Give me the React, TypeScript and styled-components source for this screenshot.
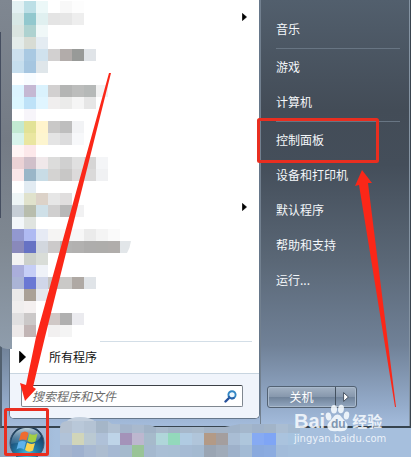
import React from 'react';
import styled, { createGlobalStyle } from 'styled-components';

const GlobalStyle = createGlobalStyle`
  * { box-sizing: border-box; }
  body {
    margin: 0;
    overflow: hidden;
    font: 12px/20px "Noto Sans CJK SC", sans-serif;
  }
  button, input { font: inherit; }
`;

const Desktop = styled.div`
  position: relative;
  display: flex;
  flex-direction: column;
  min-height: 100vh;
  overflow: hidden;
  background: #a6bedb;
`;

const StartMenu = styled.div`
  display: flex;
  padding-left: 7px;
  border-left: 2px solid #52606f;
  border-right: 1px solid #39444f;
  border-bottom: 2px solid #37444f;
  background: linear-gradient(#525f6d 0, #434c57 110px, #444e5a 165px, #5a6776 260px, #708197 345px, #94abca 405px, #a3bbdb 425px);
`;

const Programs = styled.main`
  flex: 1;
  display: flex;
  flex-direction: column;
  margin-bottom: 7px;
  border: 1px solid #66778a;
  border-top: 0;
  border-radius: 0 0 5px 5px;
  background: #fff;
  overflow: hidden;
`;

const Expanders = styled.div`
  display: flex;
  flex-direction: column;
  align-items: flex-end;
  gap: 182px;
  height: 341px;
  padding: 13px 12px 0;
`;

const IconButton = styled.button`
  display: flex;
  align-items: center;
  padding: 0;
  border: 0;
  background: none;
`;

const Rule = styled.hr`
  margin: 0 7px 0 10px;
  border: 0;
  border-top: 1px solid #d3dee7;
`;

const AllPrograms = styled.button`
  display: flex;
  align-items: center;
  gap: 23px;
  height: 31px;
  padding: 0 9px 2px;
  border: 0;
  background: none;
  color: #111;
  text-align: left;
`;

const SearchBar = styled.form`
  display: flex;
  padding: 11px 16px 11px 11px;
  border-top: 1px solid #c8d5e0;
  background: #f0f4fb;
`;

const SearchField = styled.label`
  flex: 1;
  display: flex;
  align-items: center;
  height: 22px;
  padding: 0 5px 0 10px;
  border: 1px solid #7f8790;
  border-top-color: #3d4147;
  border-radius: 2px;
  background: #fff;
`;

const SearchInput = styled.input`
  flex: 1;
  min-width: 0;
  height: 20px;
  padding: 0;
  border: 0;
  outline: 0;
  background: none;
  font-style: italic;
  &::placeholder { color: #6c6c6c; opacity: 1; }
`;

const Places = styled.nav`
  display: flex;
  flex-direction: column;
  width: 150px;
  border-left: 1px solid #72808f;
  border-right: 1px solid #8594a3;
`;

const PlaceList = styled.ul`
  height: 386px;
  margin: 0;
  padding: 0 9px 0 15px;
  list-style: none;
  overflow: hidden;
`;

const Place = styled.li<{ $first?: boolean; $divided?: boolean }>`
  height: ${p => (p.$divided ? 38 : 35)}px;
  margin-top: ${p => (p.$first ? -22 : 0)}px;
  padding-top: ${p => (p.$divided ? 2 : 0)}px;
  border-top: ${p => (p.$divided ? '1px solid #687583' : '0')};
`;

const PlaceLink = styled.a`
  display: flex;
  align-items: center;
  height: 35px;
  padding-bottom: 4px;
  color: #f4f7fa;
  text-decoration: none;
`;

const Power = styled.div`
  display: flex;
  align-self: flex-start;
  margin-left: 6px;
  border: 1px solid #536273;
  border-radius: 3px;
  box-shadow: inset 0 0 0 1px #a9b9cb;
  background: linear-gradient(#a3b2c4, #8798ad 48%, #71849b 52%, #92a6bf);
`;

const PowerButton = styled.button<{ $narrow?: boolean }>`
  display: flex;
  align-items: center;
  justify-content: center;
  width: ${p => (p.$narrow ? 21 : 67)}px;
  height: 20px;
  padding: 0;
  border: 0;
  border-left: ${p => (p.$narrow ? '1px solid #44515f' : '0')};
  background: none;
  color: #fff;
`;

const Taskbar = styled.footer`
  display: flex;
  align-items: flex-start;
  height: 30px;
  padding-left: 9px;
  background: linear-gradient(90deg, #8fa4bd, #a6bfdd 55px);
`;

const Overlay = styled.svg`
  position: absolute;
  top: 0;
  left: 0;
  pointer-events: none;
`;

const Watermark = styled.div`
  position: absolute;
  top: 404px;
  left: 294px;
  color: rgba(246, 250, 254, 0.88);
  pointer-events: none;
`;

const Brand = styled.div`
  display: flex;
  align-items: flex-end;
  height: 28px;
  font: 700 20px/22px "Liberation Sans", sans-serif;
`;

const BrandCn = styled.span`
  margin-left: 2px;
  font: 700 15px/22px "Noto Sans CJK SC", sans-serif;
`;

const Site = styled.div`
  font: 10px/13px "DejaVu Sans", sans-serif;
`;

const _ = '';
const programTiles: string[][] = [
  ['e3f1f3', 'bcdfe6', 'ecf8f8', _, 'f8f8f8', 'fdfdfd'],
  ['d8e8e6', '92c8ce', 'e0f0f0', 'e4e4e4', 'e6e6e6', 'eeeeee'],
  ['dae4e0', 'aed2d0', 'f0f8f8'],
  ['e4ecea', 'd8dcd4', 'e4ecf2'],
  ['cde0ee', 'a9c9e2', 'd0e2ee', 'd2d0d0', 'b2acaa', '989a98', 'e0e4e8'],
  ['c6deee', 'a6c6e0', 'dfe6ea'],
  [_, 'f8fcff'],
  ['dcf4ff', 'c5b8d3', 'daf2fd', 'd2d0d0', 'b4b5b4', 'bcbdbc', 'b6b9b8', 'f2f2f2'],
  ['dcf6ff', 'bee2f8', 'e0f5ff', 'f0eeee', 'ebebea', 'f5f5f5', 'e6e6e6'],
  [_, 'f7f5fa'],
  ['c2e9d2', 'e2e296', 'fff4cc', 'c9c8c7', 'bebebe', 'f2f3f5'],
  ['d8f3eb', 'eae6a0', 'fdf5cf', 'e4e4e4', 'dcdcdd', 'f7f8fa'],
  ['fff5f5', 'fce8ea'],
  ['ebd2d5', 'd0c0ca', 'f0e8ea', 'dcdcdb', 'd0d0d0', 'e0e0e0', 'd6d5d5', 'f4f5f7'],
  ['fae7e9', '9ab6c8', 'c8dce6', 'd4d3d2', 'c8c7c6', 'dcdada', 'dad9d9', 'f0f1f3'],
  [_, 'e2ebf2'],
  ['eef5f6', 'e0e2cc', 'dcd2c8', 'e6e6e6', 'e0dede'],
  ['c6ced6', 'b8bdad', 'cfe0e8', 'd0cfcf', 'b8b8b8', 'f1f1f2'],
  ['f3f7fa', 'e0e4e0'],
  ['9298d0', 'afbaf2', 'e6eaf4', 'f5f4f3', 'f6f6f6', 'f7f7f7', 'ebebeb', 'f4f4f4', 'fafafa'],
  ['8989bb', '6672c4', 'd2d7de', 'cccaca', 'b3b3b2', 'b2b1b0', 'aeadac', 'aeadab', 'b0adab'],
  ['f3f3f3', 'ccd0cb', 'd9ddd8'],
  ['aaaedb', 'c6cef6', 'eff2f8'],
  ['aab4d6', '6a78d4', 'd0d6e9', 'c6c4c2', 'cac9c7', 'afa9a4', 'e0e4e8'],
  ['ebeaea', 'aaa197', 'e6e8ee'],
  ['f0eeee', 'f4f0f0'],
  ['e0dfe0', 'cbc8c8', _, 'd0c8c6', 'b0b0b0', 'ebebef'],
  ['ede9e9', 'c2b5b5', _, 'f2f0f0', 'f4f4f4'],
];

const taskTiles: string[][] = [
  ['b4c1d1', 'b9c8d9', 'b4c3d4', 'a5b6c8', 'b0c0d2', 'a3b4cb', 'a9b9cd', 'a0b2c6', 'a8b9cb', 'a2b4c6', 'a7b8cb', 'a9bacb', 'a3b3c5', 'a3b3c6', 'a0b3c9', 'a4b7cc', '9fb2ca', 'a2b4c8', 'aabdd2', 'a3b9d0'],
  ['b1c3d9', 'd1d5b9', 'bac9d2', 'afc1d8', 'bed4e8', 'a493b9', 'bdb7cf', 'a6bacb', 'b0d6da', '93d9bb', 'b0cbe2', 'b0c5da', 'b39a86', 'a49e9e', 'a9bdd4', 'aec6dc', '86aaf3', '7fa5f5', 'aac3de', 'a6c3df'],
  ['a6b5ce', '9fb1cf', 'a8b9d2', 'adbdd0', 'a6b9d3', 'a5bacd', '99c497', 'a5b9cf', 'aabfd5', 'a9bfd4', 'a6bbd4', 'a4bad1', '9aa5b3', 'a0abb9', '9eb1ca', 'a3bbd5', '8aaade', '8cace0', 'a3bcda', 'a4bedb'],
];

const Tiles = ({ rows, x, y }: { rows: string[][]; x: number; y: number }) => (
  <g shapeRendering="crispEdges">
    {rows.flatMap((row, r) =>
      row.map((c, i) =>
        c ? <rect key={`${r}-${i}`} x={x + i * 12} y={y + r * 12} width="12" height="12" fill={`#${c}`} /> : null
      )
    )}
  </g>
);

const Triangle = ({ size = 8, light = false }: { size?: number; light?: boolean }) => (
  <svg width={size / 2 + 1} height={size} viewBox="0 0 5 8" preserveAspectRatio="none" aria-hidden="true">
    <path d="M.5 .5 4.5 4 .5 7.5Z" fill={light ? '#fff' : '#000'} stroke={light ? '#37424f' : '#000'} strokeWidth=".7" />
  </svg>
);

const SearchIcon = () => (
  <svg width="13" height="13" viewBox="0 0 13 13" aria-hidden="true">
    <path d="M1.5 11.5 5 8" stroke="#28519b" strokeWidth="2.4" strokeLinecap="round" />
    <circle cx="8" cy="4.8" r="3.6" fill="#edf8ff" stroke="#3286c4" strokeWidth="1.9" />
    <path d="M4.6 6A3.6 3.6 0 0 0 10.4 7.5" fill="none" stroke="#2861a8" strokeWidth="1.9" />
  </svg>
);

const StartOrb = () => (
  <svg width="36" height="30" viewBox="0 0 36 30" aria-hidden="true">
    <defs>
      <radialGradient id="orb" cx="50%" cy="85%" r="80%">
        <stop offset="0" stopColor="#49c6e7" />
        <stop offset=".35" stopColor="#2480ad" />
        <stop offset=".75" stopColor="#1b4c74" />
        <stop offset="1" stopColor="#17344f" />
      </radialGradient>
      <linearGradient id="gloss" x1="0" y1="0" x2="0" y2="1">
        <stop offset="0" stopColor="#d9ecf5" stopOpacity=".85" />
        <stop offset="1" stopColor="#77a6c4" stopOpacity=".2" />
      </linearGradient>
    </defs>
    <circle cx="18" cy="15" r="17" fill="url(#orb)" stroke="#38536c" />
    <path d="M4 8C8 1 13 0 18 0s10 1 14 8c-2 5-7 7-13 6-6 0-12 1-17 2 0-3 1-6 2-8Z" fill="url(#gloss)" />
    <path d="M12 5Q16 2 19.500 5L17.500 12.500Q14 10.500 10 12.500Z" fill="#ee6b30" />
    <path d="M20.500 5.500Q24 8 28.500 5.500L26.500 13.500Q22 15.500 18.500 13Z" fill="#a2cf45" />
    <path d="M9.500 14Q13.500 12 17 14L15 21.500Q11 19 7.500 21.500Z" fill="#5fb2ea" />
    <path d="M18 14.500Q22 17 26 15L24 22.500Q20 25 16 22Z" fill="#fbd34d" />
  </svg>
);

const Paw = () => (
  <svg width="25" height="28" viewBox="0 0 25 28" role="img" aria-label="du">
    <g fill="rgba(246,250,254,.88)">
      <ellipse cx="3.500" cy="12.500" rx="2.800" ry="4" transform="rotate(-12 3.500 12.500)" />
      <ellipse cx="9" cy="5.300" rx="3" ry="4.200" />
      <ellipse cx="16" cy="5" rx="2.900" ry="4.200" transform="rotate(8 16 5)" />
      <ellipse cx="21.500" cy="11.500" rx="2.700" ry="4" transform="rotate(10 21.500 11.500)" />
      <path d="M12.500 10.500c3 0 4 3 6.500 5.500 3 3 4.500 5.500 3 8.500-1.500 3-5.500 3-9.500 2.500-4 .5-8 .5-9.500-2.500s0-5.500 3-8.500c2.500-2.500 3.500-5.500 6.500-5.500Z" />
    </g>
    <text x="6" y="24" fontFamily="Liberation Sans, sans-serif" fontSize="12" fontWeight="700" fill="#8096b1">du</text>
  </svg>
);

const places = [
  { name: '图片' },
  { name: '音乐' },
  { name: '游戏', divided: true },
  { name: '计算机' },
  { name: '控制面板', divided: true },
  { name: '设备和打印机' },
  { name: '默认程序' },
  { name: '帮助和支持' },
  { name: '运行...' },
];

export default function App() {
  return (
    <>
      <GlobalStyle />
      <Desktop>
        <StartMenu>
          <Programs>
            <Expanders>
              <IconButton aria-label="展开"><Triangle /></IconButton>
              <IconButton aria-label="展开"><Triangle /></IconButton>
            </Expanders>
            <Rule />
            <AllPrograms><Triangle size={12} />所有程序</AllPrograms>
            <SearchBar onSubmit={e => e.preventDefault()}>
              <SearchField>
                <SearchInput aria-label="搜索程序和文件" placeholder="搜索程序和文件" />
                <IconButton aria-label="搜索"><SearchIcon /></IconButton>
              </SearchField>
            </SearchBar>
          </Programs>
          <Places>
            <PlaceList>
              {places.map((p, i) => (
                <Place key={p.name} $first={i === 0} $divided={p.divided}>
                  <PlaceLink href="#">{p.name}</PlaceLink>
                </Place>
              ))}
            </PlaceList>
            <Power>
              <PowerButton>关机</PowerButton>
              <PowerButton $narrow aria-label="关机选项"><Triangle size={10} light /></PowerButton>
            </Power>
          </Places>
        </StartMenu>
        <Taskbar>
          <IconButton aria-label="开始"><StartOrb /></IconButton>
        </Taskbar>

        <Overlay width="411" height="457" viewBox="0 0 411 457" aria-hidden="true">
          <defs>
            <linearGradient id="edge" x1="0" y1="0" x2="0" y2="1">
              <stop offset="0" stopColor="#7f8791" />
              <stop offset=".4" stopColor="#747b85" />
              <stop offset=".7" stopColor="#7f8892" />
              <stop offset="1" stopColor="#8f9dac" />
            </linearGradient>
            <clipPath id="smear">
              <path d="M60 457V428Q60 421 68 421H108L112 424 150 425 155 427H225L240 424H290L300 427V457Z" />
            </clipPath>
          </defs>
          <path d="M0 0H12V349H7Q3 349 0 346Z" fill="url(#edge)" />
          <path d="M0 32h1v186h-1Z" fill="#454e60" />
          <path d="M12 337H100V343H12Z" fill="#fff" />
          <Tiles rows={programTiles} x={12} y={1} />
          <path d="M120 241h11q-1 7-4 12h-7Z" fill="#e2e6e9" />
          <path d="M66 422Q70 417 80 417T96 422Z" fill="#c3cfdd" />
          <g clipPath="url(#smear)">
            <Tiles rows={taskTiles} x={60} y={421} />
          </g>
          <g fill="#fb2718">
            <path d="M109 73H111L45 337 33 387 36 389 25 401 20 383 26 385 36 337Z" />
            <path d="M362 170 372 183 368 183 396 407 395 407 359 185 355 186Z" />
          </g>
          <g fill="none" stroke="#e92e20" strokeWidth="3">
            <rect x="258.500" y="119.500" width="119" height="42" rx="1" />
            <rect x="5.500" y="409.500" width="42" height="45" rx="1" />
          </g>
        </Overlay>
        <Watermark>
          <Brand>Bai<Paw /><BrandCn>经验</BrandCn></Brand>
          <Site>jingyan.baidu.com</Site>
        </Watermark>
      </Desktop>
    </>
  );
}
